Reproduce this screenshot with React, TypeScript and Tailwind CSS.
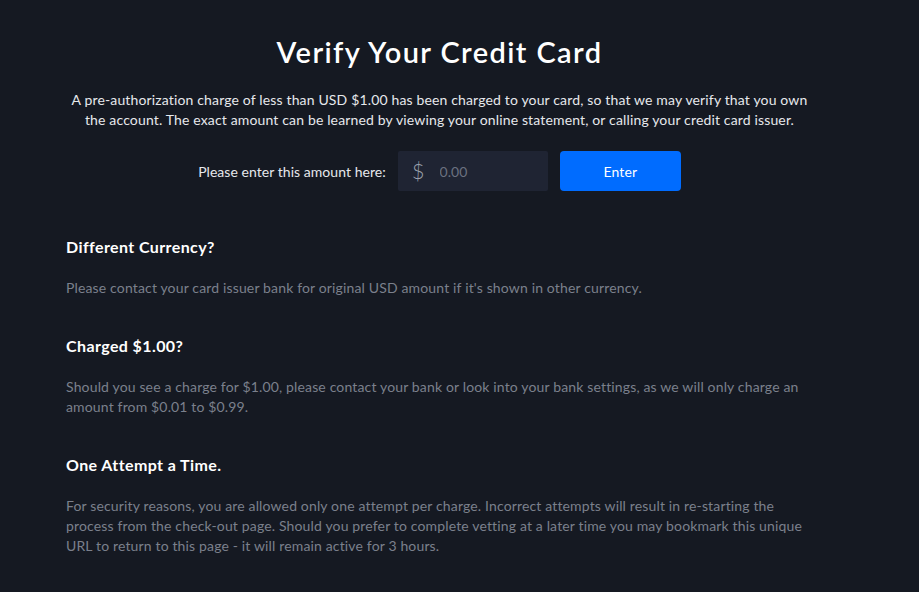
const sections = [
  {
    title: 'Different Currency?',
    body: "Please contact your card issuer bank for original USD amount if it's shown in other currency.",
  },
  {
    title: 'Charged $1.00?',
    body: 'Should you see a charge for $1.00, please contact your bank or look into your bank settings, as we will only charge an amount from $0.01 to $0.99.',
  },
  {
    title: 'One Attempt a Time.',
    body: 'For security reasons, you are allowed only one attempt per charge. Incorrect attempts will result in re-starting the process from the check-out page. Should you prefer to complete vetting at a later time you may bookmark this unique URL to return to this page - it will remain active for 3 hours.',
  },
];

export default function App() {
  return (
    <div className="min-h-[592px] w-full bg-[#151922] font-['Lato',sans-serif] text-white">
      <div className="w-[747px] ml-[66px] pt-[34px]">
        <h1 className="text-center text-[29px] leading-[36px] font-semibold tracking-[1.4px]">Verify Your Credit Card</h1>
        <p className="mt-[20px] text-center text-[14px] leading-[20px] tracking-[0.15px] text-[#e6e8ec]">
          A pre-authorization charge of less than USD $1.00 has been charged to your card, so that we may verify that you own
          the account. The exact amount can be learned by viewing your online statement, or calling your credit card issuer.
        </p>
        <div className="mt-[21px] flex items-center justify-center">
          <span className="text-[14px] tracking-[0.05px] text-[#e6e8ec] mr-[12px]">Please enter this amount here:</span>
          <div className="w-[150px] h-[40px] bg-[#1f2433] rounded-[2px] flex items-center">
            <span className="ml-[14px] text-[22px] font-light text-[#9aa0ac] leading-none">$</span>
            <input
              placeholder="0.00"
              className="ml-[15px] w-[90px] bg-transparent outline-none text-[14px] text-white placeholder:text-[#6b7180]"
            />
          </div>
          <button className="ml-[12px] w-[121px] h-[40px] rounded-[4px] bg-[#006cff] text-[14px] tracking-[0.15px] text-white">Enter</button>
        </div>
        <div className="mt-[44px]">
          {sections.map((s) => (
            <div key={s.title} className="mb-[36px]">
              <h2 className="text-[16px] leading-[24px] font-bold tracking-[0.4px]">{s.title}</h2>
              <p className="mt-[19px] text-[14px] leading-[20px] tracking-[0.15px] text-[#7b808c]">{s.body}</p>
            </div>
          ))}
        </div>
      </div>
    </div>
  );
}
